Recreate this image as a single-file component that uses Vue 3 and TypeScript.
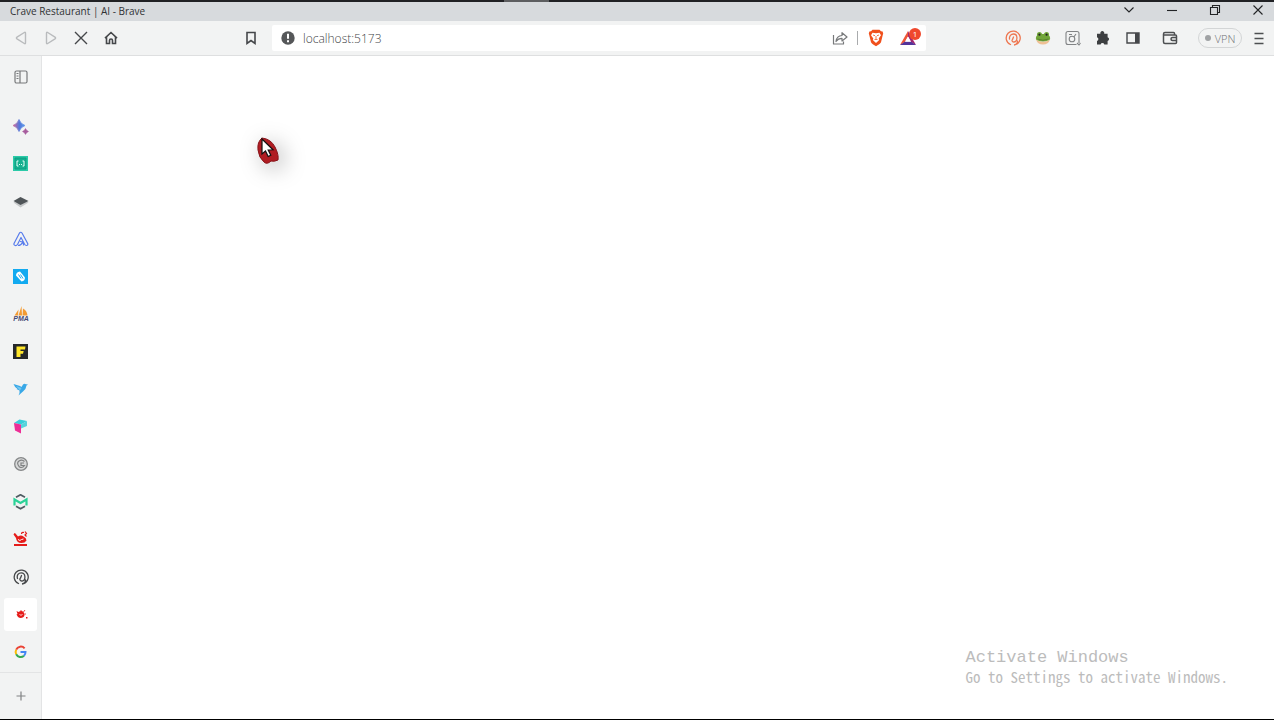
<script setup lang="ts">
import { ref } from 'vue'

const address = ref('localhost:5173')
const activeSite = ref('crave')

const sites: { id: string; label: string }[] = [
  { id: 'spark', label: 'AI assistant' },
  { id: 'json', label: 'JSON tools' },
  { id: 'layers', label: 'Layers' },
  { id: 'peak', label: 'App console' },
  { id: 'link', label: 'Sync' },
  { id: 'pma', label: 'phpMyAdmin' },
  { id: 'f', label: 'F' },
  { id: 'bird', label: 'Bird' },
  { id: 'cube', label: 'Cube' },
  { id: 'coin', label: 'Coin' },
  { id: 'mail', label: 'Mailtrap' },
  { id: 'roast', label: 'Roast' },
  { id: 'spiral', label: 'Spiral' },
  { id: 'crave', label: 'Crave Restaurant' },
  { id: 'google', label: 'Google' },
]
</script>

<template>
  <div class="browser">
    <div class="screen-edge"><span class="edge-tab"></span></div>

    <header class="titlebar">
      <span class="title">Crave Restaurant | AI - Brave</span>
      <div class="window-controls">
        <button aria-label="Search tabs"><svg width="12" height="12" viewBox="0 0 12 12"><path d="M1.500 3.500 6 8l4.500-4.500" /></svg></button>
        <button aria-label="Minimize"><svg width="12" height="12" viewBox="0 0 12 12"><path d="M1 6.500h10" /></svg></button>
        <button aria-label="Restore"><svg width="12" height="12" viewBox="0 0 12 12"><path d="M1.500 3.500h7v7h-7zM3.500 3.500v-2h7v7h-2" /></svg></button>
        <button aria-label="Close"><svg width="12" height="12" viewBox="0 0 12 12"><path d="m1.500 1.500 9 9m0-9-9 9" /></svg></button>
      </div>
    </header>

    <nav class="toolbar" aria-label="Browser toolbar">
      <div class="nav-group">
        <button aria-label="Back" class="dim"><svg class="line" width="16" height="16" viewBox="0 0 16 16"><path d="M12.500 3.200v9.600q0 1.400-1.200.7L4 8.900q-1.200-.9 0-1.800l7.300-4.600q1.200-.7 1.200.7z" /></svg></button>
        <button aria-label="Forward" class="dim"><svg class="line" width="16" height="16" viewBox="0 0 16 16"><path d="M3.500 3.200v9.600q0 1.400 1.200.7L12 8.900q1.200-.9 0-1.800L4.700 2.500q-1.200-.7-1.200.7z" /></svg></button>
        <button aria-label="Stop"><svg class="line" width="16" height="16" viewBox="0 0 16 16"><path d="m2 2 12 12M14 2 2 14" /></svg></button>
        <button aria-label="Home"><svg class="line" width="16" height="16" viewBox="0 0 16 16"><path class="heavy" d="M2 8.200 8 2.500l6 5.700M3.500 7.200V13.500h3v-3q0-1.500 1.500-1.500t1.500 1.500v3h3V7.200" /></svg></button>
        <button class="bookmark" aria-label="Bookmark"><svg class="line" width="16" height="16" viewBox="0 0 16 16"><path class="heavy" d="M4 2.500h8v11L8 10.500l-4 3z" /></svg></button>
      </div>

      <div class="address">
        <svg width="14" height="14" viewBox="0 0 14 14"><circle cx="7" cy="7" r="6.700" fill="#555759" /><path d="M6 2.800h2v5H6zM6 9.200h2v2H6z" fill="#fff" /></svg>
        <input v-model="address" aria-label="Address" spellcheck="false" />
        <button aria-label="Share">
          <svg width="16" height="16" viewBox="0 0 16 16" fill="none" stroke="#77797b" stroke-width="1.200" stroke-linejoin="round"><path d="M1.500 5v9h10v-2.500M4 11.500C4.500 7.500 6.500 5.600 10 5.500V2.700L15 7l-5 4V8.300c-2.500 0-4.500 1-6 3.200z" /></svg>
        </button>
        <span class="separator"></span>
        <button class="shield" aria-label="Brave Shields">
          <svg width="16" height="18" viewBox="0 0 16 18"><path d="M4.500.8h7l1.500 1.500 1.600.2.600 2-.5 1.700-1.700 7Q12.500 14.500 8 17.300 3.500 14.500 3 13.200L1.300 6.200.8 4.500l.6-2L3 2.300z" fill="#f0501d" /><path d="m4.500 3.800 3.500.5 3.500-.5 1.500 2.400-2.300 3.400.5 1.400L8 14l-3.200-3 .5-1.400L3 6.200z" fill="#fff" /><path d="m5 6 2 .7M11 6l-2 .7M8 7v3M6.500 10.500h3" stroke="#f0501d" stroke-width=".8" /></svg>
        </button>
        <button class="rewards" aria-label="Brave Rewards, 1 notification">
          <svg width="16" height="16" viewBox="0 0 16 16"><path d="M8 1 0 15l5-3 3-5.500z" fill="#ee5739" /><path d="m8 1 8 14-5-3-3-5.500z" fill="#a3266e" /><path d="M0 15h16l-5-3.500H5z" fill="#54349a" /><path d="m8 6.500 3 5.200H5z" fill="#fff" /></svg>
          <span class="badge">1</span>
        </button>
      </div>

      <div class="ext-group">
        <button aria-label="Spiral extension"><svg width="16" height="16" viewBox="0 0 16 16" fill="none" stroke="#ee7650" stroke-width="1.300" stroke-linecap="round"><path d="M5.500 14.500A7 7 0 1 1 9 15q3.500-.5 3.500-4" /><path d="M4.500 9C4 6 6 4 8.500 4c4.500 0 4.500 7.500.5 8-2 .2-2.500-2-1.500-2.500l1-2.500" /></svg></button>
        <button aria-label="Frog extension"><svg width="16" height="16" viewBox="0 0 16 16"><path d="M1 9.500Q8 14 15 9.500 13.500 14.500 8 14.500T1 9.500z" fill="#efc094" /><path d="M1 9.500C.5 7 1.500 6 2 5.500 1.500 3 3 2 4.500 2s2.300 1 2.500 2h2c.2-1 1-2 2.500-2S14.500 3 14 5.500c.5.500 1.500 1.500 1 4-3.500 2.500-10.500 2.500-14 0z" fill="#72a63a" /><circle cx="4.400" cy="4.700" r="1.100" fill="#222" /><circle cx="11.600" cy="4.700" r="1.100" fill="#222" /><path d="M2.500 9q5.500 2.500 11 0" fill="none" stroke="#50782a" stroke-width=".8" /></svg></button>
        <button aria-label="Capture extension"><svg width="16" height="16" viewBox="0 0 16 16" fill="none" stroke="#818385" stroke-width="1.100"><path d="M11.500 14.500H3Q1 14.500 1 12.500v-9Q1 1.500 3 1.500h9q2 0 2 2V13" /><circle cx="7" cy="9" r="2.800" /><path d="M4 4.500h3M8.800 7 11 4M12 13l2 2 1.500-2" /></svg></button>
        <button aria-label="Extensions"><svg width="16" height="16" viewBox="0 0 16 16"><path d="M2 3.700h3.400a2 2 0 1 1 3.800 0h3.400v3.500a1.900 1.900 0 0 1 0 3.700v3.600H9.300a1.900 1.900 0 0 0-3.700 0H2V11a2 2 0 0 0 0-3.800z" fill="#3d3f41" /></svg></button>
        <button aria-label="Side panel"><svg width="16" height="16" viewBox="0 0 16 16"><path d="M2 3h12v10H2z" fill="none" stroke="#45474a" stroke-width="1.400" /><path d="M10 3h4v10h-4z" fill="#45474a" /></svg></button>
        <button class="wallet" aria-label="Wallet"><svg width="16" height="16" viewBox="0 0 16 16" fill="none" stroke="#4d4f51" stroke-width="1.500" stroke-linejoin="round"><path d="M12.500 5V3.500q0-1-1-1H3Q1.500 2.500 1.500 4v8q0 1.500 1.500 1.500h10.500q1 0 1-1V6q0-1-1-1H2M14.500 7.500h-4q-1.500 0-1.500 1.500t1.500 1.500h4" /></svg></button>
        <button class="vpn"><i></i>VPN</button>
        <button class="menu" aria-label="Menu"><svg width="12" height="14" viewBox="0 0 12 14"><path d="M1.500 2.500h9M1.500 7.500h9M1.500 12.500h9" stroke="#4d4f51" stroke-width="1.400" /></svg></button>
      </div>
    </nav>

    <div class="body">
      <aside class="sidebar">
        <button class="panel-toggle" aria-label="Toggle sidebar">
          <svg width="16" height="16" viewBox="0 0 16 16" fill="none" stroke="#77797b" stroke-width="1.200"><rect x="2" y="2" width="12" height="12" rx="1.500" /><path d="M7 2v12M3.500 4.500h2M3.500 7h2M3.500 9.500h2" /></svg>
        </button>

        <div class="sites">
          <button v-for="site in sites" :key="site.id" :class="{ active: activeSite === site.id }" :aria-label="site.label" @click="activeSite = site.id">
            <svg width="16" height="16" viewBox="0 0 16 16" fill="none">
              <template v-if="site.id === 'spark'">
                <defs>
                  <linearGradient id="spark-fill"><stop offset="0" stop-color="#d06a9a" /><stop offset=".55" stop-color="#5179dc" /><stop offset="1" stop-color="#639be9" /></linearGradient>
                </defs>
                <path d="M6 .5Q7.500 5 12 6.500 7.500 8 6 12.500 4.500 8 0 6.500 4.500 5 6 .5z" fill="url(#spark-fill)" stroke="url(#spark-fill)" stroke-width=".8" />
                <path d="M12.500 9.500q.8 2.200 3 3-2.200.8-3 3-.8-2.200-3-3 2.200-.8 3-3z" fill="#a75c9d" stroke="#a75c9d" stroke-width=".5" />
              </template>
              <template v-else-if="site.id === 'json'">
                <path d="M0 0h15v15H0z" fill="#2ccaa8" />
                <path d="M2 2h11v11H2z" fill="#14b08f" stroke="#0f9c81" />
                <path d="M5.500 5H4v5h1.500M9.500 5H11v5H9.500" stroke="#e8fff8" />
                <path d="M6 8.500h3" stroke="#e8fff8" stroke-dasharray="1 1" />
              </template>
              <template v-else-if="site.id === 'layers'">
                <path d="m.5 8.500 7 5 8-5-8-3z" fill="#c6c8c9" />
                <path d="m.5 7 7-4 8 4-8 4z" fill="#505558" />
              </template>
              <template v-else-if="site.id === 'peak'">
                <path d="M1 12.500 6.500 2q1.300-1.500 2.500 0l5.700 10.500q.5 2-1.200 2-1.200 0-1.900-1.200L8 6.500l-3.500 7q-1 1.300-2.300 1-1.700-.4-1.200-2zM5 14.500q3.500 0 4.800-4M7 10.500q4 0 3.500 4" stroke="#587cec" stroke-width="1.200" stroke-linejoin="round" />
              </template>
              <template v-else-if="site.id === 'link'">
                <path d="M0 0h15v15H0z" fill="#12aaf0" />
                <path d="M7 2.500Q3 3 3 6.500L8.500 12.500Q12 12 12 8.500z" fill="#fff" />
                <path d="M5.500 5.500 8 9.500M7.500 5.500l2.500 4" stroke="#12aaf0" />
              </template>
              <template v-else-if="site.id === 'pma'">
                <path d="m1.500 9.500 4-6-.5 6zM5.500 9.500 8.500 0 9 9.500zM9.500 9.500 10 2.500q4 2 4.500 7z" fill="#f49b32" />
                <text x="8" y="15" text-anchor="middle" class="pma-text">PMA</text>
              </template>
              <template v-else-if="site.id === 'f'">
                <path d="M0 0h15v15H0z" fill="#25272a" />
                <path d="M3.500 2.500h9L12 5.500H7.500V7h3.200L10 9.700H7.500V13h-4z" fill="#ffe62a" />
              </template>
              <template v-else-if="site.id === 'bird'">
                <path d="M.5 3 7 5l1.500 1L10 3.500q1.500-1.500 3-.2l2 .2-1.500 1Q13 8 10.500 10L5.500 14.500q1.500-2.500 1-5L3.500 8h1Q1.500 6 .5 3z" fill="#39a8e7" />
                <path d="m3 5 5.500 2L7 9.500z" fill="#78c7ef" />
              </template>
              <template v-else-if="site.id === 'cube'">
                <path d="M1 4 6.500.5 14 2 8 5.500z" fill="#39cdda" />
                <path d="M8 5.500 14 2v5L8 9.500z" fill="#58d3dc" />
                <path d="m1 4 7 1.500v9L2 11.500z" fill="#ed2e96" />
              </template>
              <template v-else-if="site.id === 'coin'">
                <circle cx="8" cy="8" r="6.300" fill="#d8d9d9" stroke="#858788" stroke-width="1.300" />
                <path d="M11.500 5.500Q9 3 6 5T6.500 11q3 1.500 5-1.500H8V7h3" stroke="#808283" stroke-width="1.200" />
              </template>
              <template v-else-if="site.id === 'mail'">
                <path d="M3 3.300 7.500.8 12 3.300M3 12.200l4.500 2.500 4.500-2.500" stroke="#505c62" stroke-width="1.800" />
                <path d="M1.500 11.500v-6l6 3.500 6-3.500v6" stroke="#2bd297" stroke-width="2.200" />
              </template>
              <template v-else-if="site.id === 'roast'">
                <path d="M1 13h13v2H1zM.5 3.500 1.500 2l1 .5L5 5.500q3-2 5.500 0 3 1.500 3 4-1.500 2.500-5 2.500-5 0-5.500-5z" fill="#e51c1a" />
                <path d="M5 8.500q2 2 3.500 0l2-.5" stroke="#fff" />
                <path d="M8.500 3q0-2 2.500-1.500M13.500 5.500 12 4l1.500-1.500L12 .5" stroke="#e51c1a" stroke-width="1.200" />
              </template>
              <template v-else-if="site.id === 'spiral'">
                <path d="M5.500 14.500A7 7 0 1 1 9 15q3.500-.5 3.500-4M4.500 9.500C3.500 6 5.500 3.800 8.200 3.800c4.800 0 4.800 7.700.8 8.200-2 .2-2.700-2-1.500-3l1-2.500" stroke="#46484a" stroke-width="1.300" stroke-linecap="round" />
              </template>
              <template v-else-if="site.id === 'crave'">
                <path d="m3.500 5 2 1q3-2 5 0 2 3 0 5-3 2-5.500 0L3.500 8.500l1-.5zM13 11h1.500v1.500H13z" fill="#e51c1a" />
                <path d="M8 5.500V4M10.500 6l1.500-2M11.500 8h1.500" stroke="#e51c1a" stroke-width=".8" />
                <path d="M6.500 8.500q1.500 1.500 3 0" stroke="#fff" stroke-width=".8" />
              </template>
              <template v-else>
                <path d="M11.600 4.300A5 5 0 0 0 3.200 5.700" stroke="#ea4335" stroke-width="2" />
                <path d="M3.200 5.700a5 5 0 0 0 0 4.600" stroke="#fbbc05" stroke-width="2" />
                <path d="M3.200 10.300a5 5 0 0 0 7.800 1.500" stroke="#34a853" stroke-width="2" />
                <path d="M11 11.800Q12.500 10.300 12.500 8h-5" stroke="#4285f4" stroke-width="2" />
              </template>
            </svg>
          </button>
        </div>

        <button class="add" aria-label="Add site">
          <svg width="12" height="12" viewBox="0 0 12 12"><path d="M6 1.500v9M1.500 6h9" stroke="#808284" stroke-width="1.200" /></svg>
        </button>
      </aside>

      <main class="page">
        <div class="watermark">
          <p class="watermark-title">Activate Windows</p>
          <p class="watermark-text">Go to Settings to activate Windows.</p>
        </div>
      </main>
    </div>

    <div class="pointer" aria-hidden="true">
      <svg width="24" height="30" viewBox="0 0 24 30">
        <path d="M5 2Q0 6 1 14t6 12q3 3 7-1 3 1 7-1 1-5-3-13T5 2z" fill="#b01c22" stroke="#86141a" />
        <path d="M5 3v15l3.500-3 2.700 5.500 2.600-1.300-2.600-5.200 4.800-.2z" fill="#fff" stroke="#111" stroke-width="1.200" />
      </svg>
    </div>
  </div>
</template>

<style>
body {
  margin: 0;
}
</style>

<style scoped>
.browser {
  position: relative;
  display: flex;
  flex-direction: column;
  box-sizing: border-box;
  height: 100vh;
  overflow: hidden;
  border-bottom: 1px solid #000;
  background: #fff;
  color: #333;
  font-family: "Open Sans", "Noto Sans", sans-serif;
}

button {
  display: flex;
  flex: none;
  align-items: center;
  justify-content: center;
  padding: 0;
  border: 0;
  background: none;
  color: inherit;
  font: inherit;
}

svg {
  display: block;
  flex: none;
}

.screen-edge {
  display: flex;
  flex: none;
  justify-content: center;
  height: 2px;
  background: #202124;
}

.edge-tab {
  width: 45px;
  margin-right: 221px;
  background: #5d5e60;
}

.titlebar {
  display: flex;
  flex: none;
  justify-content: space-between;
  height: 19px;
  background: #d7dadd;
}

.title {
  padding-left: 10px;
  color: #303234;
  font-size: 10px;
  line-height: 18px;
}

.window-controls {
  display: flex;
  gap: 11px;
  padding-bottom: 3px;
}

.window-controls button {
  width: 32px;
}

.window-controls path {
  fill: none;
  stroke: #222426;
  stroke-width: 1.1;
}

.toolbar {
  display: flex;
  flex: none;
  align-items: center;
  height: 34px;
  border-bottom: 1px solid #dedfe0;
  background: #f2f3f3;
}

.nav-group {
  display: flex;
  flex: none;
  box-sizing: border-box;
  width: 266px;
  margin-right: 6px;
  padding-left: 6px;
  color: #45474a;
}

.nav-group button,
.ext-group button {
  width: 30px;
  height: 28px;
}

.nav-group .dim {
  color: #b9bbbd;
}

.nav-group .bookmark {
  margin-left: auto;
}

.line {
  fill: none;
  stroke: currentColor;
  stroke-width: 1.4;
}

.line .heavy {
  stroke-width: 1.6;
}

.address {
  display: flex;
  flex: 1;
  align-items: center;
  min-width: 0;
  height: 26px;
  padding-left: 9px;
  border-radius: 2px;
  background: #fff;
}

.address input {
  flex: 1;
  min-width: 0;
  height: 24px;
  margin-left: 8px;
  padding: 0;
  border: 0;
  outline: 0;
  background: none;
  color: #444648;
  font: 300 12px "Open Sans", "Noto Sans", sans-serif;
}

.address button {
  width: 34px;
  height: 26px;
}

.separator {
  width: 1px;
  height: 14px;
  background: #a9abad;
}

.address .shield {
  width: 36px;
}

.address .rewards {
  position: relative;
  width: 32px;
  padding-right: 4px;
}

.badge {
  position: absolute;
  top: 3px;
  right: 5px;
  width: 12px;
  height: 12px;
  border-radius: 50%;
  background: #ef482d;
  color: #fff;
  font-size: 8px;
  line-height: 12px;
  text-align: center;
}

.ext-group {
  display: flex;
  flex: none;
  align-items: center;
  padding-left: 72px;
}

.ext-group .wallet {
  margin-left: 7px;
}

.ext-group .vpn {
  gap: 4px;
  width: 44px;
  height: 20px;
  margin-left: 13px;
  border: 1px solid #d3d5d6;
  border-radius: 10px;
  color: #707274;
  font-size: 11px;
  font-weight: 300;
}

.vpn i {
  width: 6px;
  height: 6px;
  border-radius: 50%;
  background: #a0a2a4;
}

.ext-group .menu {
  margin-left: 2px;
}

.body {
  display: flex;
  flex: 1;
  min-height: 0;
}

.sidebar {
  display: flex;
  flex: none;
  flex-direction: column;
  width: 41px;
  border-right: 1px solid #e3e4e5;
  background: #f2f3f3;
}

.panel-toggle {
  height: 42px;
}

.sites {
  display: flex;
  flex: 1;
  flex-direction: column;
  align-items: center;
  justify-content: space-between;
  padding: 12px 0 4px;
}

.sites button {
  width: 33px;
  height: 33px;
  border-radius: 3px;
}

.sites .active {
  background: #fff;
}

.pma-text {
  fill: #474b76;
  font: italic bold 7px "Liberation Sans", sans-serif;
}

.add {
  height: 47px;
  border-top: 1px solid #e3e4e5;
}

.page {
  display: flex;
  flex: 1;
  align-items: flex-end;
  justify-content: flex-end;
  background: #fff;
}

.watermark {
  padding: 0 46px 32px 0;
  color: #bcbcbc;
}

.watermark p {
  margin: 0;
  white-space: nowrap;
}

.watermark-title {
  font: 17px/18px "Liberation Mono", monospace;
}

.watermark-text {
  font: 15px/20px "Noto Sans Mono CJK SC", "Liberation Mono", monospace;
}

.pointer {
  position: absolute;
  top: 136px;
  left: 257px;
  pointer-events: none;
  filter: drop-shadow(5px 5px 11px rgba(0, 0, 0, 0.3));
}
</style>
